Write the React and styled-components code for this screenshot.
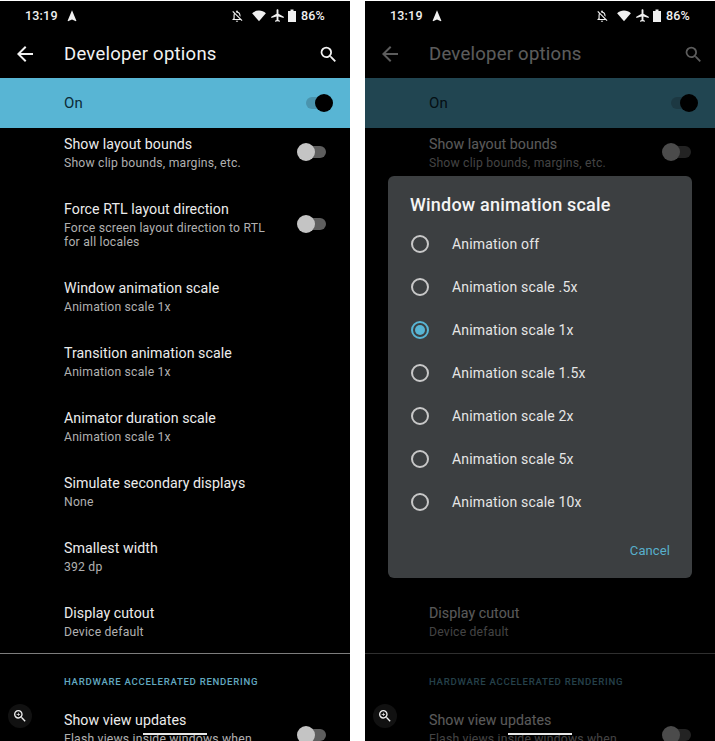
import React from "react";
import styled, { createGlobalStyle } from "styled-components";
import {
  MdArrowBack,
  MdSearch,
  MdAirplanemodeActive,
  MdNavigation,
  MdZoomIn,
  MdOutlineNotificationsOff,
} from "react-icons/md";

const Global = createGlobalStyle`
  html, body { margin: 0; padding: 0; background: #fff; }
  body { font-family: Roboto, "Noto Sans", sans-serif; }
`;

const Page = styled.div`
  display: flex;
  gap: 15px;
  width: 715px;
  height: 741px;
  padding-top: 1px;
  box-sizing: border-box;
  overflow: hidden;
`;

const Phone = styled.div`
  position: relative;
  display: flex;
  flex-direction: column;
  width: 350px;
  flex: none;
  height: 740px;
  background: #000;
  overflow: hidden;
`;

const StatusBar = styled.div`
  position: relative;
  z-index: 2;
  display: flex;
  align-items: center;
  height: 29px;
  flex: none;
  padding: 0 25px;
  color: #f0f0f0;
  font-size: 12.5px;
  font-weight: 500;
  letter-spacing: 0.2px;
`;

const Clock = styled.span`
  margin-right: 7px;
`;

const StatusIcons = styled.div`
  margin-left: auto;
  display: flex;
  align-items: center;
  gap: 3px;
`;

const BellSlot = styled.span`
  display: flex;
  margin-right: 4px;
`;

const Percent = styled.span`
  margin-left: 2px;
`;

const AppBar = styled.div`
  display: flex;
  align-items: center;
  height: 48px;
  flex: none;
  padding: 0 11px 0 13px;
  color: #f2f2f2;
`;

const BarTitle = styled.div`
  margin-left: 27px;
  font-size: 18.5px;
  letter-spacing: 0.25px;
  flex: 1;
`;

const MasterRow = styled.div`
  display: flex;
  align-items: center;
  justify-content: space-between;
  height: 50px;
  flex: none;
  padding: 0 20px 0 64px;
  background: #58b5d4;
  color: #0c2a36;
  font-size: 15px;
  letter-spacing: 0.2px;
`;

const List = styled.div`
  display: flex;
  flex-direction: column;
  gap: 30.25px;
  padding-top: 7px;
`;

const Row = styled.div`
  display: flex;
  align-items: center;
  padding: 0 24px 0 64px;
`;

const RowText = styled.div`
  flex: 1;
  max-width: 215px;
`;

const RowTitle = styled.div`
  color: #ececec;
  font-size: 14.2px;
  line-height: 18px;
  letter-spacing: 0.05px;
  white-space: nowrap;
`;

const RowSummary = styled.div`
  margin-top: 2.75px;
  color: #b0b0b0;
  font-size: 12.2px;
  line-height: 14px;
  letter-spacing: 0.2px;
`;

const Track = styled.div`
  position: relative;
  flex: none;
  width: 24px;
  height: 12px;
  margin-left: auto;
  border-radius: 6px;
  background: ${(p) => (p.$on ? "#4a94ad" : "#5e5e5e")};
`;

const Thumb = styled.div`
  position: absolute;
  top: -3px;
  ${(p) => (p.$on ? "right: -3px;" : "left: -5px;")}
  width: 18px;
  height: 18px;
  border-radius: 50%;
  background: ${(p) => (p.$on ? "#000" : "#c4c4c4")};
`;

const Divider = styled.div`
  height: 1px;
  flex: none;
  margin-top: 14px;
  background: #7d7d7d;
`;

const SectionHeader = styled.div`
  margin: 22px 0 0 64px;
  height: 12px;
  line-height: 12px;
  color: #62a9c1;
  font-size: 9.6px;
  font-weight: 500;
  letter-spacing: 0.72px;
  white-space: nowrap;
`;

const LastRow = styled(Row)`
  margin-top: 23px;
`;

const Scrim = styled.div`
  position: absolute;
  left: 0;
  right: 0;
  top: 29px;
  bottom: 0;
  background: rgba(0, 0, 0, 0.62);
`;

const ZoomBadge = styled.div`
  position: absolute;
  left: 8px;
  top: 703px;
  width: 24px;
  height: 24px;
  border-radius: 50%;
  background: #111;
  color: #eee;
  display: flex;
  align-items: center;
  justify-content: center;
`;

const HomeBar = styled.div`
  position: absolute;
  left: 143px;
  top: 732px;
  width: 64px;
  height: 2px;
  background: #e8e8e8;
`;

const Dialog = styled.div`
  position: absolute;
  left: 23px;
  top: 175px;
  width: 304px;
  height: 402px;
  box-sizing: border-box;
  border-radius: 6px;
  background: #3c3f41;
  padding: 18px 22px 0 22px;
  display: flex;
  flex-direction: column;
`;

const DialogTitle = styled.div`
  color: #f4f4f4;
  font-size: 18px;
  font-weight: 500;
  line-height: 22px;
  letter-spacing: 0.2px;
`;

const Options = styled.div`
  display: flex;
  flex-direction: column;
  margin-top: 6px;
`;

const Option = styled.div`
  display: flex;
  align-items: center;
  height: 43px;
  gap: 23px;
  color: #e6e6e6;
  font-size: 14px;
  letter-spacing: 0.17px;
`;

const Radio = styled.div`
  width: 18px;
  height: 18px;
  box-sizing: border-box;
  border-radius: 50%;
  margin-left: 1px;
  border: 2px solid ${(p) => (p.$on ? "#58b5d4" : "#c8c8c8")};
  display: flex;
  align-items: center;
  justify-content: center;
  flex: none;
  &::after {
    content: "";
    display: ${(p) => (p.$on ? "block" : "none")};
    width: 10px;
    height: 10px;
    border-radius: 50%;
    background: #58b5d4;
  }
`;

const DialogActions = styled.div`
  display: flex;
  justify-content: flex-end;
  margin-top: 20px;
`;

const Cancel = styled.div`
  color: #58b0cc;
  font-size: 13px;
  letter-spacing: 0.1px;
`;

const Switch = ({ on }) => (
  <Track $on={on}>
    <Thumb $on={on} />
  </Track>
);

const Wifi = () => (
  <svg width="16" height="15" viewBox="0 0 24 24" fill="#f0f0f0">
    <path d="M12 21 1 8.5C4 5.5 7.8 4 12 4s8 1.5 11 4.5L12 21z" />
  </svg>
);

const Battery = () => (
  <svg width="8" height="13" viewBox="0 0 8 13" fill="#f0f0f0">
    <path d="M2.5 0.5h3V2H8v11H0V2h2.5z" />
  </svg>
);

const rows = [
  ["Show layout bounds", "Show clip bounds, margins, etc.", true],
  ["Force RTL layout direction", "Force screen layout direction to RTL for all locales", true],
  ["Window animation scale", "Animation scale 1x"],
  ["Transition animation scale", "Animation scale 1x"],
  ["Animator duration scale", "Animation scale 1x"],
  ["Simulate secondary displays", "None"],
  ["Smallest width", "392 dp"],
  ["Display cutout", "Device default"],
];

const options = [
  "Animation off",
  "Animation scale .5x",
  "Animation scale 1x",
  "Animation scale 1.5x",
  "Animation scale 2x",
  "Animation scale 5x",
  "Animation scale 10x",
];

const Screen = ({ modal }) => (
  <Phone>
    <StatusBar>
      <Clock>13:19</Clock>
      <MdNavigation size={14} />
      <StatusIcons>
        <BellSlot>
          <MdOutlineNotificationsOff size={14} />
        </BellSlot>
        <Wifi />
        <MdAirplanemodeActive size={15} />
        <Battery />
        <Percent>86%</Percent>
      </StatusIcons>
    </StatusBar>
    <AppBar>
      <MdArrowBack size={24} />
      <BarTitle>Developer options</BarTitle>
      <MdSearch size={21} />
    </AppBar>
    <MasterRow>
      On
      <Switch on />
    </MasterRow>
    <List>
      {rows.map(([title, summary, toggle]) => (
        <Row key={title}>
          <RowText>
            <RowTitle>{title}</RowTitle>
            <RowSummary>{summary}</RowSummary>
          </RowText>
          {toggle && <Switch />}
        </Row>
      ))}
    </List>
    <Divider />
    <SectionHeader>HARDWARE ACCELERATED RENDERING</SectionHeader>
    <LastRow>
      <RowText>
        <RowTitle>Show view updates</RowTitle>
        <RowSummary>Flash views inside windows when updated</RowSummary>
      </RowText>
      <Switch />
    </LastRow>
    {modal && (
      <>
        <Scrim />
        <Dialog>
          <DialogTitle>Window animation scale</DialogTitle>
          <Options>
            {options.map((o) => (
              <Option key={o}>
                <Radio $on={o === "Animation scale 1x"} />
                {o}
              </Option>
            ))}
          </Options>
          <DialogActions>
            <Cancel>Cancel</Cancel>
          </DialogActions>
        </Dialog>
      </>
    )}
    <ZoomBadge>
      <MdZoomIn size={16} />
    </ZoomBadge>
    <HomeBar />
  </Phone>
);

export default function App() {
  return (
    <>
      <Global />
      <Page>
        <Screen />
        <Screen modal />
      </Page>
    </>
  );
}
